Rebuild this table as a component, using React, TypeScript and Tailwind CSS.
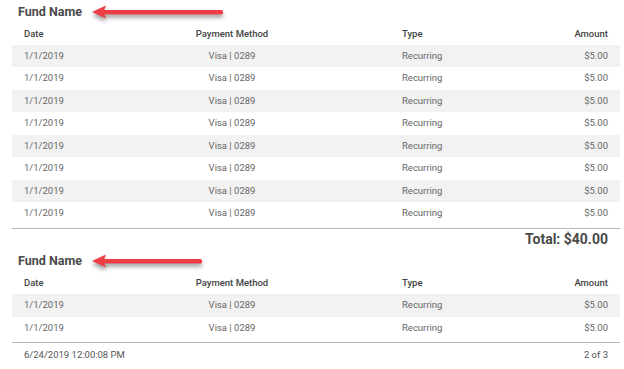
import React from 'react'

interface Payment {
  date: string
  method: string
  type: string
  amount: string
}

const payment: Payment = { date: '1/1/2019', method: 'Visa | 0289', type: 'Recurring', amount: '$5.00' }

const Arrow: React.FC<{ length: number }> = ({ length }) => {
  const w = length + 8
  return (
    <svg
      width={w}
      height={22}
      viewBox={`0 0 ${w} 22`}
      className="absolute left-[90px] top-1/2 -translate-y-1/2 drop-shadow-[0_3px_2px_rgba(0,0,0,0.4)]"
    >
      <polygon points="2,11 16,4.5 13.5,11 16,17.5" fill="#ef3d45" />
      <rect x={12} y={9} width={length - 12} height={4.5} rx={1.5} fill="#ef3d45" />
    </svg>
  )
}

const cols = 'grid grid-cols-[62px_316px_1fr_1fr] items-center'

const FundTable: React.FC<{ rows: number; arrow: number; titleH: string; headH: string }> = ({
  rows,
  arrow,
  titleH,
  headH,
}) => {
  return (
    <div>
      <div className={`relative flex items-center pl-[18px] ${titleH}`}>
        <span className="text-[12.5px] font-bold text-[#4a4a4a]">Fund Name</span>
        <Arrow length={arrow} />
      </div>
      <div className="pl-[12px] pr-[4px]">
        <div className={`${cols} ${headH} text-[9.5px] font-medium text-[#444]`}>
          <div className="pl-[12px]">Date</div>
          <div className="text-center">Payment Method</div>
          <div className="pl-[12px]">Type</div>
          <div className="pr-[12px] text-right">Amount</div>
        </div>
        {Array.from({ length: rows }).map((_, i) => (
          <div
            key={i}
            className={`${cols} h-[22.5px] text-[9.5px] text-[#666] ${i % 2 === 0 ? 'bg-[#f2f2f2]' : 'bg-white'}`}
          >
            <div className="pl-[12px]">{payment.date}</div>
            <div className="text-center">{payment.method}</div>
            <div className="pl-[12px]">{payment.type}</div>
            <div className="pr-[12px] text-right">{payment.amount}</div>
          </div>
        ))}
        <div className="mt-[3px] border-t border-[#b8b8b8]" />
      </div>
    </div>
  )
}

export default function App() {
  return (
    <div className="w-[624px] h-[369px] overflow-hidden bg-white font-['Roboto',sans-serif]">
      <FundTable rows={8} arrow={133} titleH="h-[24px]" headH="h-[20.5px]" />
      <div className="flex h-[22px] items-center justify-end pr-[16px]">
        <span className="text-[14px] font-bold text-[#4a4a4a]">Total: $40.00</span>
      </div>
      <FundTable rows={2} arrow={112} titleH="h-[21px]" headH="h-[22.5px]" />
      <div className="flex h-[24px] items-center justify-between pl-[24px] pr-[16px] text-[9.5px] text-[#555]">
        <span>6/24/2019 12:00:08 PM</span>
        <span>2 of 3</span>
      </div>
    </div>
  )
}
